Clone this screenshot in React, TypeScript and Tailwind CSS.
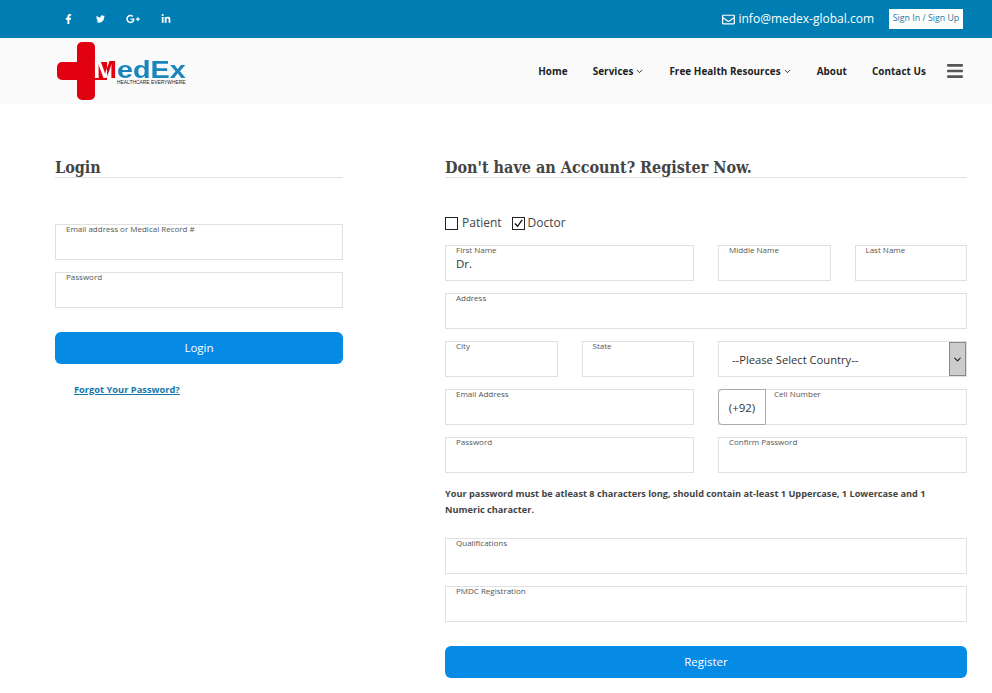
import React from 'react';
import { FaFacebookF, FaTwitter, FaGooglePlusG, FaLinkedinIn, FaRegEnvelope, FaBars } from 'react-icons/fa';
import { ChevronDown } from 'lucide-react';

function Field({ label, value, className = '' }: { label: string; value?: string; className?: string }) {
  return (
    <div className={`h-9 border border-[#e0e0e0] pl-[10px] bg-white ${className}`}>
      <div className="text-[8px] leading-[10px] mt-[-1px] text-[#555]">{label}</div>
      {value && <div className="text-[11.5px] leading-4 mt-[1px] text-[#333]">{value}</div>}
    </div>
  );
}

function Heading({ children }: { children: React.ReactNode }) {
  return (
    <h2 className="border-b border-[#e2e2e2] h-[24px] pt-[4px] text-[16px] leading-[20px] font-bold text-[#444] [font-stretch:condensed] font-['DejaVu_Serif',serif]">
      {children}
    </h2>
  );
}

function NavLink({ label, caret }: { label: string; caret?: boolean }) {
  return (
    <a className="flex items-center gap-[2px] text-[9.9px] tracking-[0.06px] font-bold text-[#222]">
      {label}
      {caret && <ChevronDown className="w-[9px] h-[9px]" strokeWidth={2.5} />}
    </a>
  );
}

function Logo() {
  return (
    <div className="relative w-[132px] h-[58px]">
      <svg width="50" height="58" viewBox="0 0 50 58" className="block">
        <path
          d="M25 0h8a5 5 0 0 1 5 5v15h12v18H38v15a5 5 0 0 1-5 5H25a5 5 0 0 1-5-5V38H5a5 5 0 0 1-5-5V25a5 5 0 0 1 5-5h15V5a5 5 0 0 1 5-5z"
          fill="#e1000f"
        />
      </svg>
      <span className="absolute left-[36px] top-[18px] origin-left scale-x-[1.2] text-[24px] leading-[20px] font-bold font-['Liberation_Sans',sans-serif]">
        <span className="bg-[linear-gradient(90deg,#fff_60%,#e1000f_60%)] bg-clip-text text-transparent">M</span>
        <span className="text-[#1a84bc]">edEx</span>
      </span>
      <span className="absolute left-[60px] top-[38px] text-[4.9px] leading-[6px] whitespace-nowrap text-[#223] font-['Liberation_Sans',sans-serif]">
        HEALTHCARE EVERYWHERE
      </span>
    </div>
  );
}

export default function App() {
  return (
    <div className="min-h-[693px] bg-white font-['Open_Sans',sans-serif] overflow-hidden">
      <div className="h-[38px] bg-[#007db3] flex items-center justify-between pl-[65px] pr-[29px] text-white">
        <div className="flex items-center gap-[21px] text-[10px]">
          <FaFacebookF className="w-[7px]" />
          <FaTwitter className="ml-[3px] w-[9px]" />
          <FaGooglePlusG className="text-[14px]" />
          <FaLinkedinIn />
        </div>
        <div className="flex items-center">
          <FaRegEnvelope className="text-[13px] mr-[3px]" />
          <span className="text-[12px]">info@medex-global.com</span>
          <a className="ml-[15px] h-5 w-[74px] bg-white text-[#1a78a8] text-[8.8px] whitespace-nowrap flex items-center justify-center">
            Sign In / Sign Up
          </a>
        </div>
      </div>

      <div className="h-[66px] bg-[#fafafa] flex items-center justify-between pl-[57px] pr-[28px]">
        <Logo />
        <div className="flex items-center">
          <div className="flex items-center gap-[25px] pt-[1px]">
            <NavLink label="Home" />
            <NavLink label="Services" caret />
            <NavLink label="Free Health Resources" caret />
            <NavLink label="About" />
            <NavLink label="Contact Us" />
          </div>
          <FaBars className="ml-[20px] text-[#555] text-[18px]" />
        </div>
      </div>

      <div className="flex pl-[55px] pr-[25px] pt-[50px] gap-[102px]">
        <div className="w-[288px]">
          <Heading>Login</Heading>
          <div className="mt-[46px] flex flex-col gap-3">
            <Field label="Email address or Medical Record #" />
            <Field label="Password" />
          </div>
          <button className="mt-6 w-full h-8 rounded-[6px] bg-[#058ae6] text-white text-[11.5px]">Login</button>
          <a className="block mt-[19px] ml-[19px] text-[9.3px] font-bold underline text-[#1478a8]">Forgot Your Password?</a>
        </div>

        <div className="w-[522px]">
          <Heading>Don't have an Account? Register Now.</Heading>
          <div className="mt-[37px] h-[16px] flex items-center text-[12px] text-[#444]">
            <span className="w-[13px] h-[13px] border border-[#222] mr-[4px]" />
            <span>Patient</span>
            <span className="ml-[10px] w-[13px] h-[13px] border border-[#222] mr-[3px] flex items-center justify-center">
              <svg viewBox="0 0 12 12" className="w-[11px] h-[11px]">
                <path d="M2 6l3 3 5-7" fill="none" stroke="#111" strokeWidth="1.4" />
              </svg>
            </span>
            <span>Doctor</span>
          </div>

          <div className="mt-[14px] grid grid-cols-4 gap-x-6 gap-y-3">
            <Field label="First Name" value="Dr." className="col-span-2" />
            <Field label="Middle Name" />
            <Field label="Last Name" />
            <Field label="Address" className="col-span-4" />
            <Field label="City" />
            <Field label="State" />
            <div className="col-span-2 h-9 border border-[#e0e0e0] flex items-center justify-between">
              <span className="ml-[13px] pt-[2px] text-[11.2px] text-[#333]">--Please Select Country--</span>
              <span className="h-[34px] w-[17px] bg-[#ccc] border border-[#888] flex items-center justify-center">
                <ChevronDown className="w-[11px] h-[11px] text-[#222]" strokeWidth={2.5} />
              </span>
            </div>
            <Field label="Email Address" className="col-span-2" />
            <div className="col-span-2 h-9 border border-[#e0e0e0] flex">
              <div className="ml-[-1px] mt-[-1px] w-[48px] h-9 border border-[#aaa] rounded-l-[4px] flex items-center justify-center text-[11.5px] text-[#333] pt-[1px]">
                (+92)
              </div>
              <div className="ml-[8px] mt-[-1px] text-[8px] leading-[10px] text-[#555]">Cell Number</div>
            </div>
            <Field label="Password" className="col-span-2" />
            <Field label="Confirm Password" className="col-span-2" />
          </div>

          <p className="mt-[13px] text-[9.2px] leading-4 font-bold text-[#444]">
            Your password must be atleast 8 characters long, should contain at-least 1 Uppercase, 1 Lowercase and 1 Numeric character.
          </p>

          <div className="mt-[20px] flex flex-col gap-3">
            <Field label="Qualifications" />
            <Field label="PMDC Registration" />
          </div>
          <button className="mt-6 w-full h-8 rounded-[6px] bg-[#058ae6] text-white text-[11.5px]">Register</button>
        </div>
      </div>
    </div>
  );
}
